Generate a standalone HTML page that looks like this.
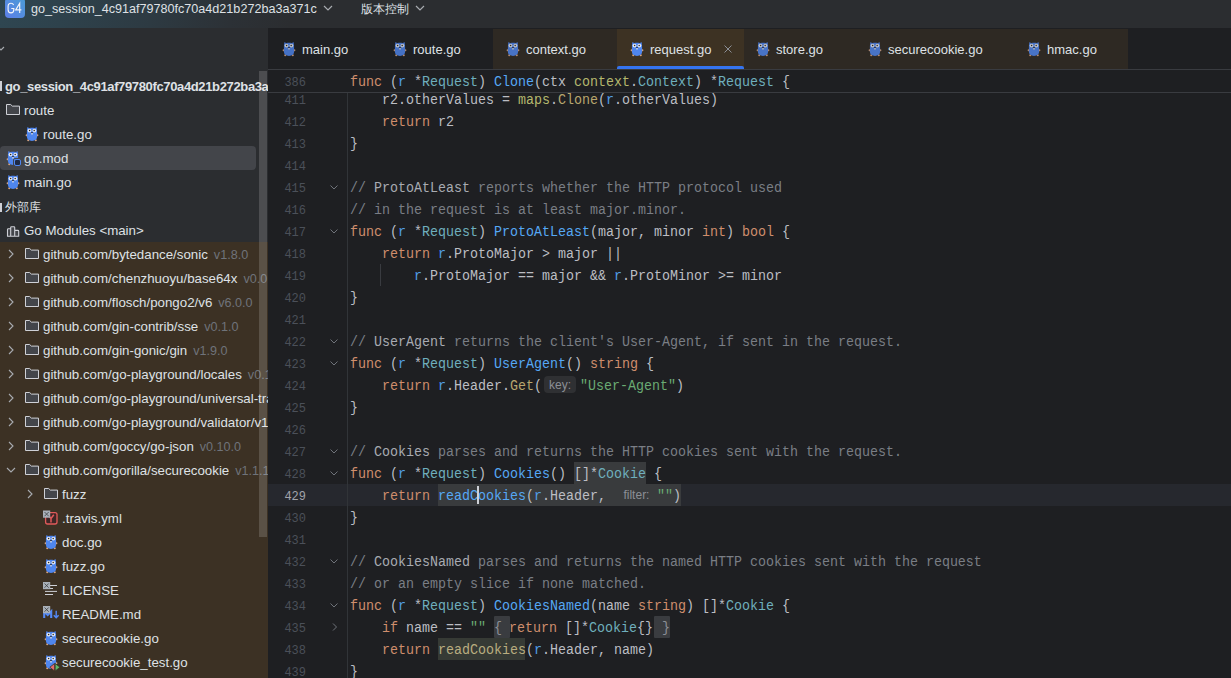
<!DOCTYPE html><html><head><meta charset="utf-8"><style>
*{margin:0;padding:0;box-sizing:border-box}
html,body{width:1231px;height:678px;overflow:hidden;background:#1e1f22}
body{position:relative;font-family:"Liberation Sans",sans-serif;-webkit-font-smoothing:antialiased}
.abs{position:absolute}
.t{position:absolute;white-space:pre;font-size:13px;color:#dfe1e5;line-height:16px}
.c{position:absolute;white-space:pre;font-family:"Liberation Mono",monospace;font-size:13.333px;line-height:22px;color:#bcbec4;left:350px;padding-top:2px;transform:scaleY(1.1);transform-origin:0 16.5px}
.ln{position:absolute;white-space:pre;font-family:"Liberation Mono",monospace;font-size:12px;line-height:22px;color:#4b5059;width:38px;text-align:right;left:268px;padding-top:2px;transform:scaleY(1.12);transform-origin:0 16.5px}
.k{color:#cf8e6d}.fd{color:#56a8f5}.ty{color:#6fafbd}.rc{color:#529ee6}.pk{color:#b5b86e}.fc{color:#b8a66e}
.st{color:#6aab73}.cm{color:#7a7e85}.cr{color:#a8abb2}
.hint{display:inline-block;font-family:"Liberation Sans",sans-serif;font-size:12px;color:#8c8f96;line-height:17px;vertical-align:1px;text-align:center}
</style></head><body>
<svg width="0" height="0" style="position:absolute">
<defs>
<symbol id="gopher" viewBox="0 0 22 22">

<circle cx="5.6" cy="12.3" r="1" fill="#d8a47f"/><circle cx="16.4" cy="12.3" r="1" fill="#d8a47f"/>
<circle cx="7.2" cy="17.2" r="1" fill="#d8a47f"/><circle cx="14.8" cy="17.2" r="1" fill="#d8a47f"/>
<path d="M5.9 10 C5.9 7.6 6.1 5.6 6.5 4.1 L8.3 5.2 C9.8 4.6 12.2 4.6 13.7 5.2 L15.5 4.1 C15.9 5.6 16.1 7.6 16.1 10 V13.8 C16.1 16.6 14.2 17.9 11 17.9 C7.8 17.9 5.9 16.6 5.9 13.8 Z" fill="#4f86ee"/>
<circle cx="8.5" cy="7.6" r="1.9" fill="#e6e8ee"/><circle cx="13.4" cy="7.6" r="1.9" fill="#e6e8ee"/>
<circle cx="8.6" cy="7.5" r="0.75" fill="#2a2a2a"/><circle cx="13.2" cy="7.5" r="0.75" fill="#2a2a2a"/>
<ellipse cx="11" cy="9.7" rx="0.9" ry="0.6" fill="#2b2420"/><rect x="10.2" y="10.2" width="1.6" height="1.2" fill="#f0eee8"/>
</symbol>
<symbol id="folder" viewBox="0 0 16 16">
<path d="M1.5 3.5 h4.2 l1.6 1.6 h7.2 v8.4 h-13 z" fill="#43454a" stroke="#ced0d6" stroke-width="1" stroke-linejoin="round"/>
</symbol>
<symbol id="chevr" viewBox="0 0 16 16"><path d="M6 4 l4 4 l-4 4" fill="none" stroke="#a8abb0" stroke-width="1.1"/></symbol>
<symbol id="chevd" viewBox="0 0 16 16"><path d="M4 6 l4 4 l4 -4" fill="none" stroke="#a8abb0" stroke-width="1.1"/></symbol>
</defs></svg>

<div class="abs" style="left:0;top:0;width:1231px;height:28px;background:linear-gradient(90deg,#2f4651 0px,#2e424c 60px,#2d3a42 150px,#2c3136 230px,#2b2d30 290px)"></div>
<div class="abs" style="left:5px;top:-2px;width:20px;height:20px;border-radius:4px;background:linear-gradient(45deg,#5d7fe8,#4a9bd6)"></div>
<svg class="abs" width="28" height="20" style="left:0;top:0"><path d="M13.6 4.9 C13.1 3.8 12.2 3.3 11 3.3 C9.2 3.3 8.1 4.6 8.1 6.5 V9.7 C8.1 11.6 9.2 12.8 11 12.8 C12.8 12.8 13.8 11.6 13.8 9.7 V8.5 H11.3" fill="none" stroke="#f4f6fa" stroke-width="1.15"/><path d="M19.7 12.9 V3.3 L15.7 9.9 H21.4" fill="none" stroke="#f4f6fa" stroke-width="1.15"/></svg>
<div class="t" style="left:31px;top:1px;font-size:12.6px;color:#dfe1e5">go_session_4c91af79780fc70a4d21b272ba3a371c</div>
<svg class="abs" width="10" height="6" style="left:323px;top:5px"><path d="M1 1 l4 4 l4 -4" fill="none" stroke="#a8abb0" stroke-width="1.2"/></svg>
<div class="t" style="left:361px;top:1px;font-size:12px;color:#dfe1e5">版本控制</div>
<svg class="abs" width="10" height="6" style="left:415px;top:5px"><path d="M1 1 l4 4 l4 -4" fill="none" stroke="#a8abb0" stroke-width="1.2"/></svg>
<div class="abs" style="left:0;top:28px;width:268px;height:650px;background:#2b2d30;overflow:hidden">
<div class="abs" style="left:0;top:214px;width:268px;height:436px;background:#3c3124"></div>
<div class="abs" style="left:0;top:118px;width:256px;height:24px;border-radius:4px;background:#43454a"></div>
</div>
<div class="abs" style="left:0;top:28px;width:268px;height:650px;overflow:hidden">
<svg class="abs" width="6" height="8" style="left:0;top:18px"><path d="M-2 1 l3 3 l3 -3" fill="none" stroke="#a8abb0" stroke-width="1.1"/></svg>
<div class="abs" style="left:0;top:53px;width:1.5px;height:10px;background:#ced0d6"></div>
<div class="t" style="left:5px;top:51px;color:#dfe1e5;font-weight:bold;font-size:13.3px"><span style="letter-spacing:-0.36px;font-size:13px">go_session_4c91af79780fc70a4d21b272ba3a371c</span></div>
<svg class="abs" width="16" height="16" style="left:5px;top:73px"><use href="#folder"/></svg>
<div class="t" style="left:24px;top:75px;color:#dfe1e5;font-size:13.3px">route</div>
<svg class="abs" width="22" height="22" style="left:20.9px;top:94.8px"><use href="#gopher"/></svg>
<div class="t" style="left:43px;top:99px;color:#dfe1e5;font-size:13.3px">route.go</div>
<svg class="abs" width="22" height="22" style="left:1.9px;top:118.8px"><use href="#gopher"/></svg>
<div class="abs" style="left:13px;top:130px;width:9px;height:9px;border:1px solid #43454a;border-radius:2px"><div style="width:7px;height:7px;border:1.4px solid #4f86ee;background:#1e2a44;border-radius:2px"></div></div>
<div class="t" style="left:24px;top:123px;color:#dfe1e5;font-size:13.3px">go.mod</div>
<svg class="abs" width="22" height="22" style="left:1.9px;top:142.8px"><use href="#gopher"/></svg>
<div class="t" style="left:24px;top:147px;color:#dfe1e5;font-size:13.3px">main.go</div>
<div class="abs" style="left:0;top:175px;width:1.5px;height:9px;background:#ced0d6"></div>
<div class="t" style="left:5px;top:171px;color:#dfe1e5;font-size:12px">外部库</div>
<svg class="abs" width="16" height="16" style="left:5px;top:194px"><path d="M2.5 14.2 v-6.6 a0.8 0.8 0 0 1 0.8 -0.8 h2.4 v7.4 z M5.7 14.2 v-8.6 a0.8 0.8 0 0 1 0.8 -0.8 h2.4 a0.8 0.8 0 0 1 0.8 0.8 v8.6 z M9.7 14.2 v-5.8 h3.2 a0.8 0.8 0 0 1 0.8 0.8 v5 z" fill="#43454a" stroke="#ced0d6" stroke-width="1.1" stroke-linejoin="round"/></svg>
<div class="t" style="left:24px;top:195px;color:#dfe1e5;font-size:13.3px">Go Modules &lt;main&gt;</div>
<svg class="abs" width="16" height="16" style="left:3px;top:218px"><use href="#chevr"/></svg>
<svg class="abs" width="16" height="16" style="left:24px;top:217px"><use href="#folder"/></svg>
<div class="t" style="left:43px;top:219px;font-size:13.3px">github.com/bytedance/sonic<span style="color:#6f737a;margin-left:6px;font-size:12.6px">v1.8.0</span></div>
<svg class="abs" width="16" height="16" style="left:3px;top:242px"><use href="#chevr"/></svg>
<svg class="abs" width="16" height="16" style="left:24px;top:241px"><use href="#folder"/></svg>
<div class="t" style="left:43px;top:243px;font-size:13.3px">github.com/chenzhuoyu/base64x<span style="color:#6f737a;margin-left:6px;font-size:12.6px">v0.0.0-20221115062448-fe3a3abad311</span></div>
<svg class="abs" width="16" height="16" style="left:3px;top:266px"><use href="#chevr"/></svg>
<svg class="abs" width="16" height="16" style="left:24px;top:265px"><use href="#folder"/></svg>
<div class="t" style="left:43px;top:267px;font-size:13.3px">github.com/flosch/pongo2/v6<span style="color:#6f737a;margin-left:6px;font-size:12.6px">v6.0.0</span></div>
<svg class="abs" width="16" height="16" style="left:3px;top:290px"><use href="#chevr"/></svg>
<svg class="abs" width="16" height="16" style="left:24px;top:289px"><use href="#folder"/></svg>
<div class="t" style="left:43px;top:291px;font-size:13.3px">github.com/gin-contrib/sse<span style="color:#6f737a;margin-left:6px;font-size:12.6px">v0.1.0</span></div>
<svg class="abs" width="16" height="16" style="left:3px;top:314px"><use href="#chevr"/></svg>
<svg class="abs" width="16" height="16" style="left:24px;top:313px"><use href="#folder"/></svg>
<div class="t" style="left:43px;top:315px;font-size:13.3px">github.com/gin-gonic/gin<span style="color:#6f737a;margin-left:6px;font-size:12.6px">v1.9.0</span></div>
<svg class="abs" width="16" height="16" style="left:3px;top:338px"><use href="#chevr"/></svg>
<svg class="abs" width="16" height="16" style="left:24px;top:337px"><use href="#folder"/></svg>
<div class="t" style="left:43px;top:339px;font-size:13.3px">github.com/go-playground/locales<span style="color:#6f737a;margin-left:6px;font-size:12.6px">v0.14.1</span></div>
<svg class="abs" width="16" height="16" style="left:3px;top:362px"><use href="#chevr"/></svg>
<svg class="abs" width="16" height="16" style="left:24px;top:361px"><use href="#folder"/></svg>
<div class="t" style="left:43px;top:363px;font-size:13.3px">github.com/go-playground/universal-translator<span style="color:#6f737a;margin-left:6px;font-size:12.6px">v0.18.1</span></div>
<svg class="abs" width="16" height="16" style="left:3px;top:386px"><use href="#chevr"/></svg>
<svg class="abs" width="16" height="16" style="left:24px;top:385px"><use href="#folder"/></svg>
<div class="t" style="left:43px;top:387px;font-size:13.3px">github.com/go-playground/validator/v10<span style="color:#6f737a;margin-left:6px;font-size:12.6px">v10.11.2</span></div>
<svg class="abs" width="16" height="16" style="left:3px;top:410px"><use href="#chevr"/></svg>
<svg class="abs" width="16" height="16" style="left:24px;top:409px"><use href="#folder"/></svg>
<div class="t" style="left:43px;top:411px;font-size:13.3px">github.com/goccy/go-json<span style="color:#6f737a;margin-left:6px;font-size:12.6px">v0.10.0</span></div>
<svg class="abs" width="16" height="16" style="left:3px;top:434px"><use href="#chevd"/></svg>
<svg class="abs" width="16" height="16" style="left:24px;top:433px"><use href="#folder"/></svg>
<div class="t" style="left:43px;top:435px;font-size:13.3px">github.com/gorilla/securecookie<span style="color:#6f737a;margin-left:6px;font-size:12.6px">v1.1.1</span></div>
<svg class="abs" width="16" height="16" style="left:22px;top:458px"><use href="#chevr"/></svg>
<svg class="abs" width="16" height="16" style="left:43px;top:457px"><use href="#folder"/></svg>
<div class="t" style="left:62px;top:459px;color:#dfe1e5;font-size:13.3px">fuzz</div>
<svg class="abs" width="18" height="18" style="left:42px;top:479px"><rect x="3.6" y="5.6" width="11.4" height="11.4" rx="2" fill="#3d2626" stroke="#e05a5a" stroke-width="1.3"/><path d="M9 15.5 v-4 M9 11.5 l-2.5 -3 M9 11.5 l2.8 -3.8" stroke="#e05a5a" stroke-width="1.5" fill="none"/><rect x="1" y="3.5" width="7.2" height="7.2" fill="#a9b0b8"/><path d="M2.5 5 l4.2 4.2 M6.7 5 l-4.2 4.2" stroke="#3a3d40" stroke-width="0.8"/></svg>
<div class="t" style="left:62px;top:483px;color:#dfe1e5;font-size:13.3px">.travis.yml</div>
<svg class="abs" width="22" height="22" style="left:39.9px;top:502.8px"><use href="#gopher"/></svg>
<div class="t" style="left:62px;top:507px;color:#dfe1e5;font-size:13.3px">doc.go</div>
<svg class="abs" width="22" height="22" style="left:39.9px;top:526.8px"><use href="#gopher"/></svg>
<div class="t" style="left:62px;top:531px;color:#dfe1e5;font-size:13.3px">fuzz.go</div>
<svg class="abs" width="18" height="18" style="left:42px;top:553px"><path d="M8 4.5 h7 M8 7.5 h3 M3 10.4 h12 M3 13.5 h8" stroke="#ced0d6" stroke-width="1"/><rect x="1" y="1" width="7.2" height="7.2" fill="#a9b0b8"/><path d="M2.5 2.5 l4.2 4.2 M6.7 2.5 l-4.2 4.2" stroke="#3a3d40" stroke-width="0.8"/></svg>
<div class="t" style="left:62px;top:555px;color:#dfe1e5;font-size:13.3px">LICENSE</div>
<svg class="abs" width="18" height="18" style="left:42px;top:577px"><path d="M2.2 12.9 V6.4 L5.7 10 L9.2 6.4 V12.9" stroke="#548af7" stroke-width="2.1" fill="none" stroke-linejoin="miter"/><path d="M14.2 5.8 V12.4 M11.8 10.2 l2.4 2.6 l2.4 -2.6" stroke="#548af7" stroke-width="1.4" fill="none"/><rect x="1" y="1" width="7.2" height="7.2" fill="#a9b0b8"/><path d="M2.5 2.5 l4.2 4.2 M6.7 2.5 l-4.2 4.2" stroke="#3a3d40" stroke-width="0.8"/></svg>
<div class="t" style="left:62px;top:579px;color:#dfe1e5;font-size:13.3px">README.md</div>
<svg class="abs" width="22" height="22" style="left:39.9px;top:598.8px"><use href="#gopher"/></svg>
<div class="t" style="left:62px;top:603px;color:#dfe1e5;font-size:13.3px">securecookie.go</div>
<svg class="abs" width="22" height="22" style="left:39.9px;top:622.8px"><use href="#gopher"/></svg>
<div class="t" style="left:62px;top:627px;color:#dfe1e5;font-size:13.3px">securecookie_test.go</div>
<svg class="abs" width="12" height="10" style="left:49px;top:635px"><path d="M5.6 0.5 v7.5 l-4.8 -3.75 z" fill="#e06c6c" stroke="#3c3124" stroke-width="0.8"/><path d="M6.2 0.5 v7.5 l4.8 -3.75 z" fill="#5fb865" stroke="#3c3124" stroke-width="0.8"/></svg>
</div>
<div class="abs" style="left:259px;top:71px;width:8px;height:466px;background:rgba(255,255,255,0.155)"></div>
<svg class="abs" width="22" height="22" style="left:277.9px;top:38.0px;opacity:0.8"><use href="#gopher"/></svg>
<div class="t" style="left:302px;top:42px;color:#dfe1e5">main.go</div>
<svg class="abs" width="22" height="22" style="left:388.9px;top:38.0px;opacity:0.8"><use href="#gopher"/></svg>
<div class="t" style="left:413px;top:42px;color:#dfe1e5">route.go</div>
<div class="abs" style="left:493px;top:29px;width:124px;height:40px;background:#2e2923"></div>
<svg class="abs" width="22" height="22" style="left:501.9px;top:38.0px;opacity:0.8"><use href="#gopher"/></svg>
<div class="t" style="left:526px;top:42px;color:#dfe1e5">context.go</div>
<div class="abs" style="left:617px;top:29px;width:127px;height:40px;background:#3d3223"></div>
<svg class="abs" width="22" height="22" style="left:625.9px;top:38.0px"><use href="#gopher"/></svg>
<div class="t" style="left:650px;top:42px;color:#dfe1e5">request.go</div>
<div class="abs" style="left:617px;top:66px;width:127px;height:4px;background:#3574f0;border-radius:2px 2px 0 0"></div>
<svg class="abs" width="10" height="10" style="left:723px;top:44px"><path d="M1.5 1.5 L8.5 8.5 M8.5 1.5 L1.5 8.5" stroke="#8c8f96" stroke-width="1"/></svg>
<div class="abs" style="left:744px;top:29px;width:111px;height:40px;background:#2e2923"></div>
<svg class="abs" width="22" height="22" style="left:751.9px;top:38.0px;opacity:0.8"><use href="#gopher"/></svg>
<div class="t" style="left:776px;top:42px;color:#dfe1e5">store.go</div>
<div class="abs" style="left:855px;top:29px;width:159px;height:40px;background:#2e2923"></div>
<svg class="abs" width="22" height="22" style="left:863.9px;top:38.0px;opacity:0.8"><use href="#gopher"/></svg>
<div class="t" style="left:888px;top:42px;color:#dfe1e5">securecookie.go</div>
<div class="abs" style="left:1014px;top:29px;width:114px;height:40px;background:#2e2923"></div>
<svg class="abs" width="22" height="22" style="left:1022.9px;top:38.0px;opacity:0.8"><use href="#gopher"/></svg>
<div class="t" style="left:1047px;top:42px;color:#dfe1e5">hmac.go</div>
<div class="abs" style="left:268px;top:69px;width:963px;height:1px;background:#393b40"></div>
<div class="abs" style="left:268px;top:484px;width:963px;height:22px;background:#26282e"></div>
<div class="abs" style="left:574px;top:462px;width:72px;height:22px;background:#393b3d"></div>
<div class="abs" style="left:438px;top:484px;width:243px;height:22px;background:#393b3d"></div>
<div class="abs" style="left:438px;top:638px;width:87px;height:22px;background:#363a35"></div>
<div class="abs" style="left:544px;top:376px;width:32px;height:17px;background:#2f3033;border-radius:4px"></div>
<div class="abs" style="left:494px;top:616px;width:16px;height:22px;background:#3a3c40;border-radius:1px"></div>
<div class="abs" style="left:654px;top:616px;width:16px;height:22px;background:#3a3c40;border-radius:1px"></div>
<div class="abs" style="left:347px;top:92px;width:1px;height:586px;background:#313438"></div>
<div class="abs" style="left:380px;top:264px;width:1px;height:22px;background:#393b40"></div>
<div class="ln" style="top:88px;color:#4b5059">411</div>
<div class="c" style="top:88px">    r2.otherValues = <span class="pk">maps</span>.<span class="fc">Clone</span>(<span class="rc">r</span>.otherValues)</div>
<div class="ln" style="top:110px;color:#4b5059">412</div>
<div class="c" style="top:110px">    <span class="k">return</span> r2</div>
<div class="ln" style="top:132px;color:#4b5059">413</div>
<div class="c" style="top:132px">}</div>
<div class="ln" style="top:154px;color:#4b5059">414</div>
<div class="c" style="top:154px"></div>
<div class="ln" style="top:176px;color:#4b5059">415</div>
<div class="c" style="top:176px"><span class="cm">// </span><span class="cr">ProtoAtLeast</span><span class="cm"> reports whether the HTTP protocol used</span></div>
<div class="ln" style="top:198px;color:#4b5059">416</div>
<div class="c" style="top:198px"><span class="cm">// in the request is at least major.minor.</span></div>
<div class="ln" style="top:220px;color:#4b5059">417</div>
<div class="c" style="top:220px"><span class="k">func</span> (<span class="rc">r</span> *<span class="ty">Request</span>) <span class="fd">ProtoAtLeast</span>(major, minor <span class="k">int</span>) <span class="k">bool</span> {</div>
<div class="ln" style="top:242px;color:#4b5059">418</div>
<div class="c" style="top:242px">    <span class="k">return</span> <span class="rc">r</span>.ProtoMajor &gt; major ||</div>
<div class="ln" style="top:264px;color:#4b5059">419</div>
<div class="c" style="top:264px">        <span class="rc">r</span>.ProtoMajor == major &amp;&amp; <span class="rc">r</span>.ProtoMinor &gt;= minor</div>
<div class="ln" style="top:286px;color:#4b5059">420</div>
<div class="c" style="top:286px">}</div>
<div class="ln" style="top:308px;color:#4b5059">421</div>
<div class="c" style="top:308px"></div>
<div class="ln" style="top:330px;color:#4b5059">422</div>
<div class="c" style="top:330px"><span class="cm">// </span><span class="cr">UserAgent</span><span class="cm"> returns the client's User-Agent, if sent in the request.</span></div>
<div class="ln" style="top:352px;color:#4b5059">423</div>
<div class="c" style="top:352px"><span class="k">func</span> (<span class="rc">r</span> *<span class="ty">Request</span>) <span class="fd">UserAgent</span>() <span class="k">string</span> {</div>
<div class="ln" style="top:374px;color:#4b5059">424</div>
<div class="c" style="top:374px">    <span class="k">return</span> <span class="rc">r</span>.Header.<span class="fc">Get</span>(<span class="hint" style="width:38px;padding-right:2px">key:</span><span class="st">"User-Agent"</span>)</div>
<div class="ln" style="top:396px;color:#4b5059">425</div>
<div class="c" style="top:396px">}</div>
<div class="ln" style="top:418px;color:#4b5059">426</div>
<div class="c" style="top:418px"></div>
<div class="ln" style="top:440px;color:#4b5059">427</div>
<div class="c" style="top:440px"><span class="cm">// </span><span class="cr">Cookies</span><span class="cm"> parses and returns the HTTP cookies sent with the request.</span></div>
<div class="ln" style="top:462px;color:#4b5059">428</div>
<div class="c" style="top:462px"><span class="k">func</span> (<span class="rc">r</span> *<span class="ty">Request</span>) <span class="fd">Cookies</span>() []*<span class="ty">Cookie</span> {</div>
<div class="ln" style="top:484px;color:#a1a3ab">429</div>
<div class="c" style="top:484px">    <span class="k">return</span> <span class="fd">readCookies</span>(<span class="rc">r</span>.Header, <span class="hint" style="width:43px;padding-left:2px">filter:</span><span class="st">""</span>)</div>
<div class="ln" style="top:506px;color:#4b5059">430</div>
<div class="c" style="top:506px">}</div>
<div class="ln" style="top:528px;color:#4b5059">431</div>
<div class="c" style="top:528px"></div>
<div class="ln" style="top:550px;color:#4b5059">432</div>
<div class="c" style="top:550px"><span class="cm">// </span><span class="cr">CookiesNamed</span><span class="cm"> parses and returns the named HTTP cookies sent with the request</span></div>
<div class="ln" style="top:572px;color:#4b5059">433</div>
<div class="c" style="top:572px"><span class="cm">// or an empty slice if none matched.</span></div>
<div class="ln" style="top:594px;color:#4b5059">434</div>
<div class="c" style="top:594px"><span class="k">func</span> (<span class="rc">r</span> *<span class="ty">Request</span>) <span class="fd">CookiesNamed</span>(name <span class="k">string</span>) []*<span class="ty">Cookie</span> {</div>
<div class="ln" style="top:616px;color:#4b5059">435</div>
<div class="c" style="top:616px">    <span class="k">if</span> name == <span class="st">""</span> </div>
<div class="ln" style="top:638px;color:#4b5059">438</div>
<div class="c" style="top:638px">    <span class="k">return</span> <span style="color:#b9ad80">readCookies</span>(<span class="rc">r</span>.Header, name)</div>
<div class="ln" style="top:660px;color:#4b5059">439</div>
<div class="c" style="top:660px">}</div>
<div class="c" style="top:616px;left:494px;color:#8c8f96">{</div>
<div class="c" style="top:616px;left:509px"><span class="k">return</span> []*<span class="ty">Cookie</span>{}</div>
<div class="c" style="top:616px;left:662px;color:#8c8f96">}</div>
<svg class="abs" width="16" height="16" style="left:326px;top:179px"><path d="M4.5 6.5 l3.5 3.5 l3.5 -3.5" fill="none" stroke="#6f737a" stroke-width="1"/></svg>
<svg class="abs" width="16" height="16" style="left:326px;top:223px"><path d="M4.5 6.5 l3.5 3.5 l3.5 -3.5" fill="none" stroke="#6f737a" stroke-width="1"/></svg>
<svg class="abs" width="16" height="16" style="left:326px;top:333px"><path d="M4.5 6.5 l3.5 3.5 l3.5 -3.5" fill="none" stroke="#6f737a" stroke-width="1"/></svg>
<svg class="abs" width="16" height="16" style="left:326px;top:355px"><path d="M4.5 6.5 l3.5 3.5 l3.5 -3.5" fill="none" stroke="#6f737a" stroke-width="1"/></svg>
<svg class="abs" width="16" height="16" style="left:326px;top:443px"><path d="M4.5 6.5 l3.5 3.5 l3.5 -3.5" fill="none" stroke="#6f737a" stroke-width="1"/></svg>
<svg class="abs" width="16" height="16" style="left:326px;top:465px"><path d="M4.5 6.5 l3.5 3.5 l3.5 -3.5" fill="none" stroke="#6f737a" stroke-width="1"/></svg>
<svg class="abs" width="16" height="16" style="left:326px;top:553px"><path d="M4.5 6.5 l3.5 3.5 l3.5 -3.5" fill="none" stroke="#6f737a" stroke-width="1"/></svg>
<svg class="abs" width="16" height="16" style="left:326px;top:597px"><path d="M4.5 6.5 l3.5 3.5 l3.5 -3.5" fill="none" stroke="#6f737a" stroke-width="1"/></svg>
<svg class="abs" width="16" height="16" style="left:327px;top:619px"><path d="M6 4.5 l3.5 3.5 l-3.5 3.5" fill="none" stroke="#6f737a" stroke-width="1"/></svg>
<div class="abs" style="left:477px;top:486px;width:2px;height:18px;background:#ced0d6"></div>
<div class="abs" style="left:268px;top:70px;width:963px;height:22px;background:#1e1f22"></div>
<div class="ln" style="top:70px">386</div>
<div class="c" style="top:70px"><span class="k">func</span> (<span class="rc">r</span> *<span class="ty">Request</span>) <span class="fd">Clone</span>(ctx <span class="pk">context</span>.<span class="ty">Context</span>) *<span class="ty">Request</span> {</div>
<div class="abs" style="left:268px;top:92px;width:963px;height:1px;background:#393b40"></div>
</body></html>
